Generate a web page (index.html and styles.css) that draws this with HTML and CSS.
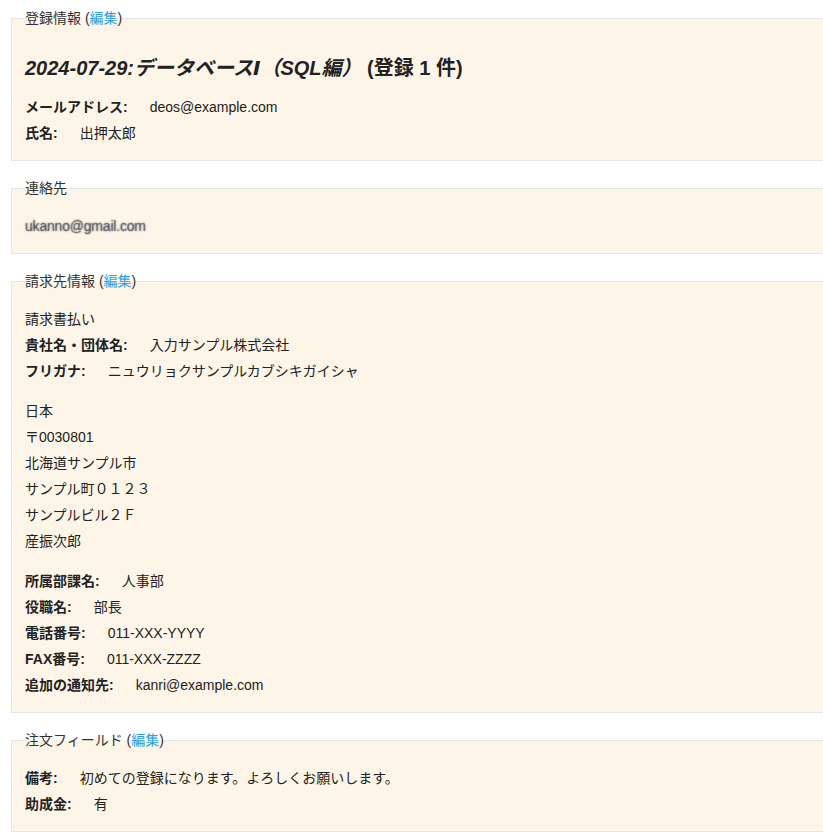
FILE: index.html
```html
<!DOCTYPE html>
<html lang="ja">
<head>
<meta charset="utf-8">
<title>登録情報</title>
<link rel="stylesheet" href="styles.css">
</head>
<body>
<fieldset class="box">
  <legend class="box-legend">登録情報 (<a class="edit" href="#">編集</a>)</legend>
  <h2 class="title"><em>2024-07-29:データベースⅠ（SQL編）</em> (登録 1 件)</h2>
  <div class="group">
    <div class="row"><span class="label">メールアドレス:</span>deos@example.com</div>
    <div class="row"><span class="label">氏名:</span>出押太郎</div>
  </div>
</fieldset>

<fieldset class="box">
  <legend class="box-legend">連絡先</legend>
  <div class="group">
    <div class="row"><span class="blurred">ukanno@gmail.com</span></div>
  </div>
</fieldset>

<fieldset class="box">
  <legend class="box-legend">請求先情報 (<a class="edit" href="#">編集</a>)</legend>
  <div class="group">
    <div class="row">請求書払い</div>
    <div class="row"><span class="label">貴社名・団体名:</span>入力サンプル株式会社</div>
    <div class="row"><span class="label">フリガナ:</span>ニュウリョクサンプルカブシキガイシャ</div>
  </div>
  <div class="group">
    <div class="row">日本</div>
    <div class="row">〒0030801</div>
    <div class="row">北海道サンプル市</div>
    <div class="row">サンプル町０１２３</div>
    <div class="row">サンプルビル２Ｆ</div>
    <div class="row">産振次郎</div>
  </div>
  <div class="group">
    <div class="row"><span class="label">所属部課名:</span>人事部</div>
    <div class="row"><span class="label">役職名:</span>部長</div>
    <div class="row"><span class="label">電話番号:</span>011-XXX-YYYY</div>
    <div class="row"><span class="label">FAX番号:</span>011-XXX-ZZZZ</div>
    <div class="row"><span class="label">追加の通知先:</span>kanri@example.com</div>
  </div>
</fieldset>

<fieldset class="box">
  <legend class="box-legend">注文フィールド (<a class="edit" href="#">編集</a>)</legend>
  <div class="group">
    <div class="row"><span class="label">備考:</span>初めての登録になります。よろしくお願いします。</div>
    <div class="row"><span class="label">助成金:</span>有</div>
  </div>
</fieldset>
</body>
</html>
```

FILE: styles.css
```css
html, body {
  margin: 0;
  padding: 0;
  background: #ffffff;
}

body {
  font-family: "Liberation Sans", "Noto Sans CJK JP", sans-serif;
  font-size: 14px;
  color: #222222;
  padding-top: 8px;
}

.box {
  margin: 0 0 17px 11px;
  padding: 15px 13px 14px 13px;
  border: 1px solid #e6e6e6;
  border-right: none;
  background: #fdf5e7;
  min-width: 0;
}

.box-legend {
  padding: 0;
  line-height: 20px;
  color: #333333;
}

.edit {
  color: #2d9ee0;
  text-decoration: none;
}

.title {
  margin: 12px 0 13px;
  font-family: "Liberation Sans", "DejaVu Sans", "Noto Sans CJK JP", sans-serif;
  font-size: 20px;
  line-height: 26px;
  font-weight: bold;
  color: #222222;
}

.title em {
  font-style: italic;
}

.group + .group {
  margin-top: 14px;
}

.row {
  line-height: 26px;
}

.label {
  font-weight: bold;
  margin-right: 22px;
}

.blurred {
  color: rgba(30, 34, 51, 0.2);
  text-shadow: 0 0 1.6px rgba(30, 34, 51, 0.95);
  letter-spacing: -0.2px;
}
```
